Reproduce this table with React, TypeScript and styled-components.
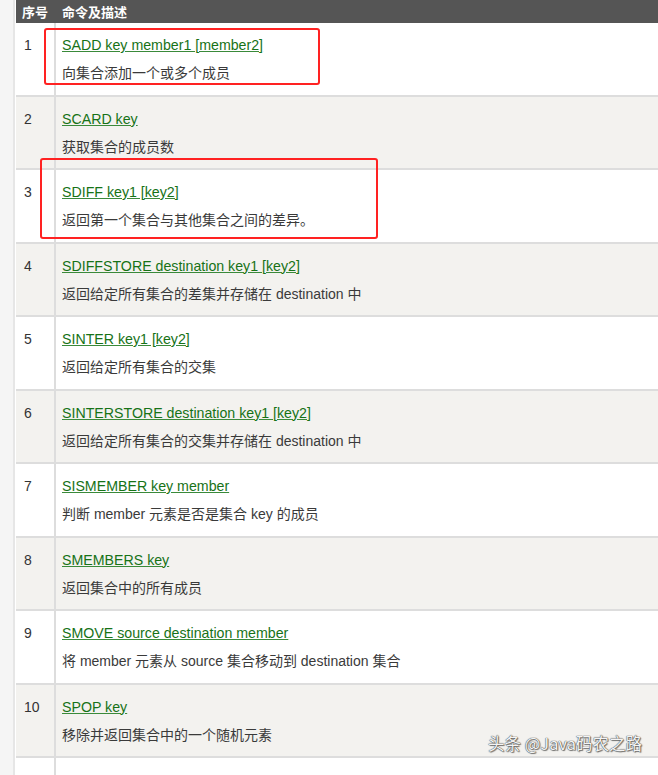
import React from "react";
import styled, { createGlobalStyle } from "styled-components";

const Global = createGlobalStyle`
  html, body { margin: 0; padding: 0; background: #fff; overflow: hidden; }
  body { font-family: "Liberation Sans", Arial, "Noto Sans CJK SC", sans-serif; }
`;

const Page = styled.div`
  display: flex;
  width: 658px;
  height: 775px;
  overflow: hidden;
  position: relative;
`;

const SideStrip = styled.div`
  width: 13px;
  flex: none;
  background: #f5f5f5;
  border-right: 2px solid #e6e6e6;
`;

const Table = styled.div`
  flex: 1;
  display: flex;
  flex-direction: column;
  position: relative;
  margin-left: 1px;
`;

const HeaderRow = styled.div`
  flex: none;
  display: grid;
  grid-template-columns: 40px 1fr;
  height: 23px;
  background: #555555;
  color: #fff;
  font-weight: bold;
  font-size: 13px;
  font-family: "Noto Sans CJK SC", sans-serif;
  align-items: center;
`;

const HeadCell = styled.div<{ $pad: number }>`
  padding-left: ${(p) => p.$pad}px;
  line-height: 23px;
`;

const Row = styled.div<{ $alt: boolean }>`
  flex: none;
  display: grid;
  grid-template-columns: 40px 1fr;
  background: ${(p) => (p.$alt ? "#f3f2ef" : "#ffffff")};
  border-bottom: 2px solid #dddddd;
  height: 71.5px;
`;

const NumCell = styled.div`
  padding: 12px 0 0 8px;
  font-size: 14px;
  line-height: 20px;
  color: #333;
  border-right: 2px solid #dddddd;
`;

const DescCell = styled.div`
  padding: 12px 0 0 6px;
  display: flex;
  flex-direction: column;
  gap: 8px;
`;

const CmdLink = styled.a`
  font-size: 14.2px;
  line-height: 20px;
  color: #177217;
  text-decoration: underline;
  text-decoration-color: #3a8a3a;
  white-space: nowrap;
`;

const Desc = styled.div`
  font-size: 14px;
  line-height: 20px;
  color: #3a3a3a;
  white-space: nowrap;
`;

const Mark = styled.div<{ $x: number; $y: number; $w: number; $h: number }>`
  position: absolute;
  left: ${(p) => p.$x}px;
  top: ${(p) => p.$y}px;
  width: ${(p) => p.$w}px;
  height: ${(p) => p.$h}px;
  border: 2px solid #ff2222;
  border-radius: 3px;
  box-sizing: border-box;
  pointer-events: none;
`;

const Watermark = styled.div`
  position: absolute;
  right: 16px;
  bottom: 20px;
  font-size: 16.5px;
  font-family: "Noto Sans CJK SC", sans-serif;
  color: #f4f4f4;
  text-shadow: 0 0 1px #444, 0 0 1px #444, 1px 1px 1px rgba(0,0,0,0.5);
  white-space: nowrap;
`;

const rows: [string, string][] = [
  ["SADD key member1 [member2]", "向集合添加一个或多个成员"],
  ["SCARD key", "获取集合的成员数"],
  ["SDIFF key1 [key2]", "返回第一个集合与其他集合之间的差异。"],
  ["SDIFFSTORE destination key1 [key2]", "返回给定所有集合的差集并存储在 destination 中"],
  ["SINTER key1 [key2]", "返回给定所有集合的交集"],
  ["SINTERSTORE destination key1 [key2]", "返回给定所有集合的交集并存储在 destination 中"],
  ["SISMEMBER key member", "判断 member 元素是否是集合 key 的成员"],
  ["SMEMBERS key", "返回集合中的所有成员"],
  ["SMOVE source destination member", "将 member 元素从 source 集合移动到 destination 集合"],
  ["SPOP key", "移除并返回集合中的一个随机元素"],
];

export default function App() {
  return (
    <>
      <Global />
      <Page>
        <SideStrip />
        <Table>
          <HeaderRow>
            <HeadCell $pad={6}>序号</HeadCell>
            <HeadCell $pad={6}>命令及描述</HeadCell>
          </HeaderRow>
          {rows.map(([cmd, desc], i) => (
            <Row key={i} $alt={i % 2 === 1}>
              <NumCell>{i + 1}</NumCell>
              <DescCell>
                <CmdLink href="#">{cmd}</CmdLink>
                <Desc>{desc}</Desc>
              </DescCell>
            </Row>
          ))}
          <Row $alt={false}>
            <NumCell />
            <DescCell />
          </Row>
          <Mark $x={28} $y={28} $w={276} $h={57} />
          <Mark $x={24} $y={158} $w={338} $h={81} />
        </Table>
        <Watermark>头条 @Java码农之路</Watermark>
      </Page>
    </>
  );
}
